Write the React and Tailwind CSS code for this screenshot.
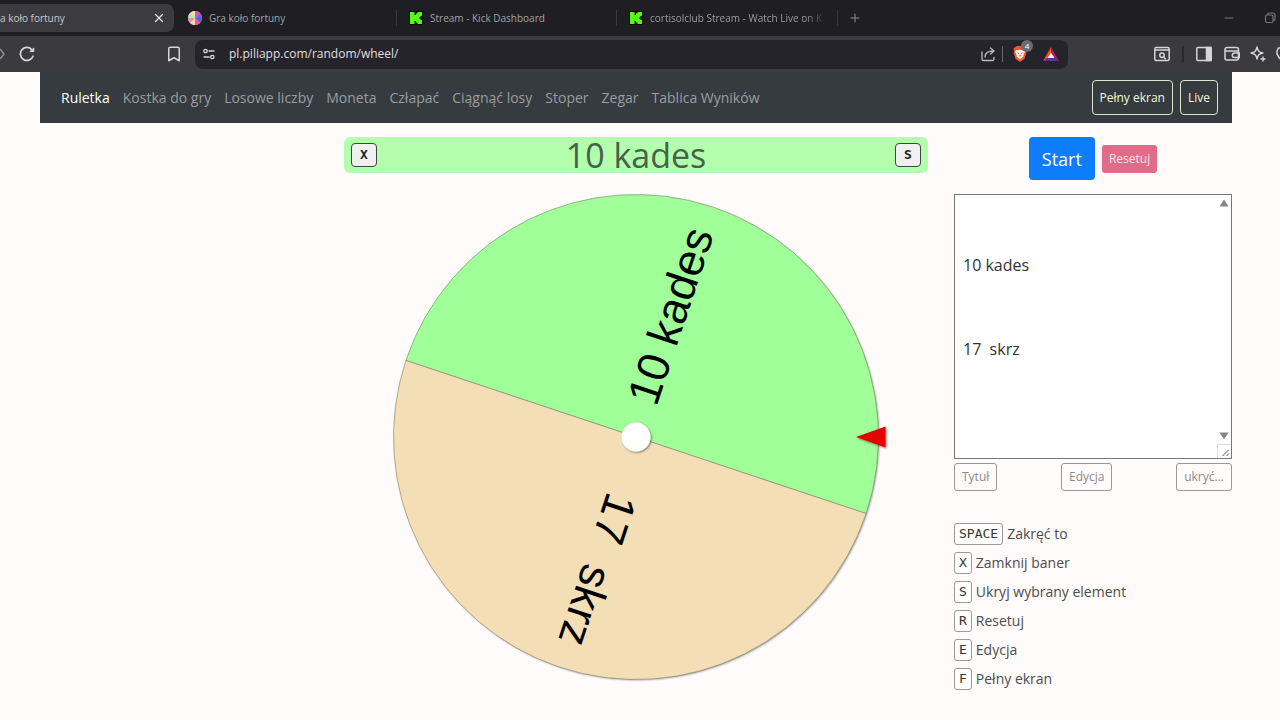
// src/pages/WheelPage.jsx
import { useState } from "react";
import { Bookmark, Minus, Plus, X } from "lucide-react";

const NAV_LINKS = [
  "Ruletka",
  "Kostka do gry",
  "Losowe liczby",
  "Moneta",
  "Człapać",
  "Ciągnąć losy",
  "Stoper",
  "Zegar",
  "Tablica Wyników",
];

const SHORTCUTS = [
  { key: "SPACE", label: "Zakręć to" },
  { key: "X", label: "Zamknij baner" },
  { key: "S", label: "Ukryj wybrany element" },
  { key: "R", label: "Resetuj" },
  { key: "E", label: "Edycja" },
  { key: "F", label: "Pełny ekran" },
];

function WheelFavicon() {
  return (
    <svg viewBox="0 0 14 14" className="w-3.5 h-3.5 flex-shrink-0" aria-hidden="true">
      <circle cx="7" cy="7" r="7" fill="#f4b6d8" />
      <path d="M7 7V0a7 7 0 0 1 5 2z" fill="#e04fa8" />
      <path d="M7 7l5-5a7 7 0 0 1 2 5z" fill="#7d5be8" />
      <path d="M7 7h7a7 7 0 0 1-2 5z" fill="#4a63d8" />
      <path d="M7 7l5 5a7 7 0 0 1-5 2z" fill="#f0559b" />
      <path d="M7 7v7a7 7 0 0 1-5-2z" fill="#f7d9a8" />
      <path d="M7 7l-5 5a7 7 0 0 1-2-5z" fill="#f28cc0" />
      <path d="M7 7H0a7 7 0 0 1 2-5z" fill="#a8f0a0" />
      <path d="M7 7L2 2a7 7 0 0 1 5-2z" fill="#e9e2b0" />
    </svg>
  );
}

function KickFavicon() {
  return (
    <svg viewBox="0 0 14 14" className="w-3.5 h-3.5 flex-shrink-0" aria-hidden="true">
      <rect width="14" height="14" fill="#0b0b0b" />
      <path d="M1 1h4.500v3H7V2.500h1.500V1H13v4h-1.500v1.500H10v1h1.500V9H13v4H8.500v-1.500H7V10H5.500v3H1z" fill="#53fc18" />
    </svg>
  );
}

function TabStrip() {
  return (
    <div className="flex items-center h-9 bg-[#1f1e23] text-[10px] text-[#a3a2a6] overflow-hidden">
      <div className="flex items-center justify-between w-[174px] h-7 pr-2 rounded-r-lg bg-[#3c3b40] text-[#c9c8cb]">
        <span className="whitespace-nowrap">a koło fortuny</span>
        <button type="button" aria-label="Zamknij kartę" className="text-[#e4e4e6]">
          <X className="w-3.5 h-3.5" strokeWidth={2.2} />
        </button>
      </div>
      <div className="flex items-center gap-[7px] w-[223px] h-4 pl-3.5 border-r border-[#3a393e]">
        <WheelFavicon />
        <span>Gra koło fortuny</span>
      </div>
      <div className="flex items-center gap-[7px] w-[220px] h-4 pl-3 border-r border-[#3a393e]">
        <KickFavicon />
        <span>Stream - Kick Dashboard</span>
      </div>
      <div className="flex items-center gap-[7px] w-[221px] h-4 pl-3 border-r border-[#3a393e]">
        <KickFavicon />
        <span className="whitespace-nowrap bg-linear-to-r from-[#a3a2a6] from-90% to-[#3a393e] bg-clip-text text-transparent">
          cortisolclub Stream - Watch Live on K
        </span>
      </div>
      <button type="button" aria-label="Nowa karta" className="ml-2.5 text-[#8e8d92]">
        <Plus className="w-3.5 h-3.5" strokeWidth={1.8} />
      </button>
      <div className="flex items-center gap-7 ml-auto pr-1 text-[#77767b]">
        <button type="button" aria-label="Minimalizuj">
          <Minus className="w-3.5 h-3.5" strokeWidth={1.8} />
        </button>
        <button type="button" aria-label="Przywróć">
          <svg viewBox="0 0 12 12" className="w-3 h-3" fill="none" stroke="currentColor" strokeWidth="1.200">
            <rect x="1.500" y="3" width="7.500" height="7.500" rx="1.500" />
            <path d="M3.500 3V2.500a1.500 1.500 0 0 1 1.500-1.500h4a2 2 0 0 1 2 2v4a1.500 1.500 0 0 1-1.500 1.500H9" />
          </svg>
        </button>
      </div>
    </div>
  );
}

function Toolbar() {
  return (
    <div className="flex items-center h-9 bg-[#3b3a3f] text-[#d6d5d8] overflow-hidden">
      <svg viewBox="0 0 5 12" className="w-[5px] h-3" fill="none" stroke="#8b8a8f" strokeWidth="1.500">
        <path d="M0 1l4 5-4 5" />
      </svg>
      <button type="button" aria-label="Odśwież" className="ml-3.5">
        <svg viewBox="0 0 16 16" className="w-4 h-4" fill="none" stroke="currentColor" strokeWidth="1.700" strokeLinecap="round">
          <path d="M14 10.200A6.500 6.500 0 1 1 13.300 4.300" />
          <path d="M11.200 5.600h3.600V2.400z" fill="currentColor" strokeWidth="1" strokeLinejoin="round" />
        </svg>
      </button>
      <button type="button" aria-label="Dodaj zakładkę" className="ml-[130px]">
        <Bookmark className="w-[18px] h-[18px]" strokeWidth={2} />
      </button>
      <div className="flex flex-1 items-center h-[29px] ml-3 pl-2 pr-[7px] rounded-lg bg-[#25242a]">
        <svg viewBox="0 0 12 12" className="w-3 h-3" fill="none" stroke="currentColor" strokeWidth="1.300" strokeLinecap="round">
          <circle cx="2.500" cy="3" r="1.700" />
          <path d="M6 3h5M1 9h5" />
          <circle cx="9.300" cy="9" r="1.700" />
        </svg>
        <input
          aria-label="Adres"
          defaultValue="pl.piliapp.com/random/wheel/"
          className="flex-1 min-w-0 ml-3.5 bg-transparent text-[12px] text-[#e0dfe2] outline-none"
        />
        <svg viewBox="0 0 16 16" className="w-4 h-4" fill="none" stroke="#b6b5b9" strokeWidth="1.400" strokeLinecap="round" strokeLinejoin="round">
          <path d="M2 6v7a1.500 1.500 0 0 0 1.500 1.500h9A1.500 1.500 0 0 0 14 13v-1.500" />
          <path d="M5 11c0-4 2.500-6 8.500-6M10.500 2l3.500 3-3.500 3" />
        </svg>
        <span className="w-px h-4 mx-1.5 bg-[#6a696e]" />
        <span className="relative w-5 h-5 ml-1">
          <svg viewBox="0 0 14 16" className="w-3.5 h-4 mt-0.5" aria-hidden="true">
            <path d="M3.500 0h7l1.500 1.500 1.500 0.500-.5 3 .5 1.500-2 6.500L7 16l-4.500-3L.5 6.500 1 5 .5 2 2 1.500z" fill="#f1562b" />
            <path d="M3 4l2 .3L7 3.800l2 .5L11 4l1 2-1.800 3 .3 1.200L7 13.300 3.500 10.200 3.800 9 2 6z" fill="#fff" />
            <path d="M4 6l2 1-.5 1.500zM10 6L8 7l.5 1.500zM7 8l1 2-1 1-1-1z" fill="#f1562b" />
          </svg>
          <span className="absolute -top-1 left-2 w-3 h-3 rounded-full bg-[#686c78] text-white text-[8px] leading-3 text-center">4</span>
        </span>
        <svg viewBox="0 0 16 14" className="w-4 h-3.5 ml-2.5 mr-0.5" aria-hidden="true">
          <path d="M8 0L0 14l8-4.500z" fill="#ff4a1c" />
          <path d="M8 0l8 14-8-4.500z" fill="#9e1f63" />
          <path d="M0 14h16L8 9z" fill="#662d91" />
          <path d="M8 5.500l3.500 5.500h-7z" fill="#fff" />
        </svg>
      </div>
      <div className="flex items-center pl-[86px]">
        <svg viewBox="0 0 16 16" className="w-4 h-4" fill="none" stroke="currentColor" strokeWidth="1.500">
          <rect x=".8" y="1.500" width="14.400" height="13" rx="1.500" />
          <path d="M1 4h14M9.800 11.300l2 2" />
          <circle cx="8" cy="9.300" r="2.200" />
        </svg>
        <span className="w-0.5 h-4 mx-3 bg-[#29282d]" />
        <svg viewBox="0 0 16 16" className="w-4 h-4" fill="none" stroke="currentColor" strokeWidth="1.500">
          <rect x=".8" y="1.500" width="14.400" height="13" rx="1" />
          <path d="M10.500 1.500h4.500v13h-4.500z" fill="currentColor" />
        </svg>
        <svg viewBox="0 0 16 16" className="w-4 h-4 ml-3" fill="none" stroke="currentColor" strokeWidth="1.500">
          <path d="M14.500 5V3.500a2 2 0 0 0-2-2H3a2 2 0 0 0-2 2V12a2 2 0 0 0 2 2h9.500a2 2 0 0 0 2-2M1 3.500A1.500 1.500 0 0 0 2.500 5h12v7" />
          <path d="M15.300 7H10.500a1.800 1.800 0 0 0 0 4.500h4.800z" />
        </svg>
        <svg viewBox="0 0 16 16" className="w-4 h-4 ml-2.5" fill="none" stroke="currentColor" strokeWidth="1.400" strokeLinejoin="round">
          <path d="M7 1c.8 4 2 5.200 6 6-4 .8-5.200 2-6 6-.8-4-2-5.200-6-6 4-.8 5.200-2 6-6z" />
          <path d="M13 10.500v5M10.500 13h5" />
        </svg>
        <svg viewBox="0 0 4 14" className="w-1 h-3.5 ml-2.5" fill="none" stroke="currentColor" strokeWidth="1.500">
          <path d="M4 1H2.500L1 4v3l3 5" />
        </svg>
      </div>
    </div>
  );
}

function Navbar() {
  return (
    <nav className="flex items-center justify-between h-[51px] pl-[21px] pr-3.5 bg-[#353b3f]">
      <div className="flex items-center gap-[13px] text-sm">
        {NAV_LINKS.map((label, i) => (
          <a key={label} href="#" className={i === 0 ? "text-white" : "text-[#9a9da0]"}>
            {label}
          </a>
        ))}
      </div>
      <div className="flex items-center gap-[7px]">
        {["Pełny ekran", "Live"].map((label) => (
          <button key={label} type="button" className="h-[35px] px-[7px] border border-[#dfe3cf] rounded text-xs text-[#f6f7dc]">
            {label}
          </button>
        ))}
      </div>
    </nav>
  );
}

function Wheel() {
  return (
    <svg viewBox="0 0 584 500" className="w-full mt-4" role="img" aria-label="Koło fortuny">
      <defs>
        <filter id="shadow" x="-10%" y="-10%" width="120%" height="120%">
          <feDropShadow dx="1" dy="1" stdDeviation="1" floodColor="#000" floodOpacity="0.5" />
        </filter>
      </defs>
      <g transform="translate(292 248)" fontFamily="Liberation Sans, Arial, sans-serif">
        <circle r="242" fill="#f4deb5" filter="url(#shadow)" />
        <g transform="rotate(18.400)" stroke="#6f7a60" strokeWidth="0.500">
          <path d="M-242.500 0a242.500 242.500 0 0 1 485 0z" fill="#a0ff98" />
          <path d="M242.500 0a242.500 242.500 0 0 1-485 0z" fill="#f4deb5" />
        </g>
        <text transform="rotate(-71.600)" x="217" y="10" textAnchor="end" fontSize="45">
          10 kades
        </text>
        <text transform="rotate(108.400)" x="217" y="10" textAnchor="end" fontSize="45" style={{ whiteSpace: "pre" }}>
          {"17  skrz"}
        </text>
        <circle r="14.500" fill="#fff" filter="url(#shadow)" />
        <path d="M220 0l29.500-10.500v21z" fill="#e60000" filter="url(#shadow)" />
      </g>
    </svg>
  );
}

function Banner({ onClose }) {
  return (
    <div className="flex items-center justify-between h-9 px-[7px] rounded-md bg-[#b3ffad] text-[#47624a]">
      <button type="button" onClick={onClose} className="w-[26px] h-6 border border-[#444] rounded-sm bg-[#f0f0f0] font-['DejaVu_Sans_Mono',monospace] text-[13px] font-bold text-[#222]">
        X
      </button>
      <span className="text-[34px] leading-9">10 kades</span>
      <button type="button" className="w-[26px] h-6 border border-[#444] rounded-sm bg-[#f0f0f0] font-['DejaVu_Sans_Mono',monospace] text-[13px] font-bold text-[#222]">
        S
      </button>
    </div>
  );
}

function SidePanel() {
  const [items, setItems] = useState("\n\n10 kades\n\n\n17  skrz\n");

  return (
    <div className="pl-5">
      <div className="flex items-center justify-center gap-[7px]">
        <button type="button" className="h-[43px] px-[13px] rounded bg-[#0d7dfb] text-lg text-white">Start</button>
        <button type="button" className="h-7 px-[7px] rounded-[3px] bg-[#df6c88] text-xs text-[#fde6ea]">Resetuj</button>
      </div>

      <div className="relative mt-3.5">
        <textarea
          aria-label="Lista"
          value={items}
          onChange={(e) => setItems(e.target.value)}
          className="block w-full h-[265px] px-2 border border-[#777] bg-white text-base leading-7 text-[#333] resize-none overflow-hidden outline-none"
        />
        <div className="absolute inset-y-px right-px flex flex-col items-end pointer-events-none">
          <svg viewBox="0 0 10 8" className="w-2.5 h-2 mt-1 mr-0.5"><path d="M5 .5L9.500 7.500h-9z" fill="#858585" /></svg>
          <svg viewBox="0 0 10 8" className="w-2.5 h-2 mt-auto mb-1 mr-0.5"><path d="M5 7.500L.5.5h9z" fill="#858585" /></svg>
          <svg viewBox="0 0 14 14" className="w-3.5 h-3.5" fill="none">
            <path d="M.5 14V.5H14" stroke="#dcdcdc" />
            <path d="M5.500 12l6-6M9.500 12l2.500-2.500" stroke="#555" />
          </svg>
        </div>
      </div>

      <div className="flex justify-between mt-1">
        {["Tytuł", "Edycja", "ukryć..."].map((label) => (
          <button key={label} type="button" className="h-7 px-[7px] border border-[#999] rounded-[3px] text-xs text-[#8a8a8a]">
            {label}
          </button>
        ))}
      </div>

      <ul className="flex flex-col gap-[7px] mt-8 text-sm text-[#4c4c4c]">
        {SHORTCUTS.map(({ key, label }) => (
          <li key={key} className="flex items-center gap-1 h-[22px]">
            <kbd className="h-[22px] px-1 border border-[#999] rounded-[3px] bg-white font-['DejaVu_Sans_Mono',monospace] text-[13px] leading-5 text-[#333]">{key}</kbd>
            {label}
          </li>
        ))}
      </ul>
    </div>
  );
}

export default function App() {
  const [bannerOpen, setBannerOpen] = useState(true);

  return (
    <div className="min-h-screen bg-[#fffbfa] font-['Open_Sans','Noto_Sans',sans-serif]">
      <header>
        <TabStrip />
        <Toolbar />
      </header>
      <div className="pl-10 pr-12">
        <Navbar />
        <main className="grid grid-cols-4 pt-3.5">
          <section className="col-start-2 col-span-2 px-1.5">
            {bannerOpen && <Banner onClose={() => setBannerOpen(false)} />}
            <Wheel />
          </section>
          <SidePanel />
        </main>
      </div>
    </div>
  );
}
